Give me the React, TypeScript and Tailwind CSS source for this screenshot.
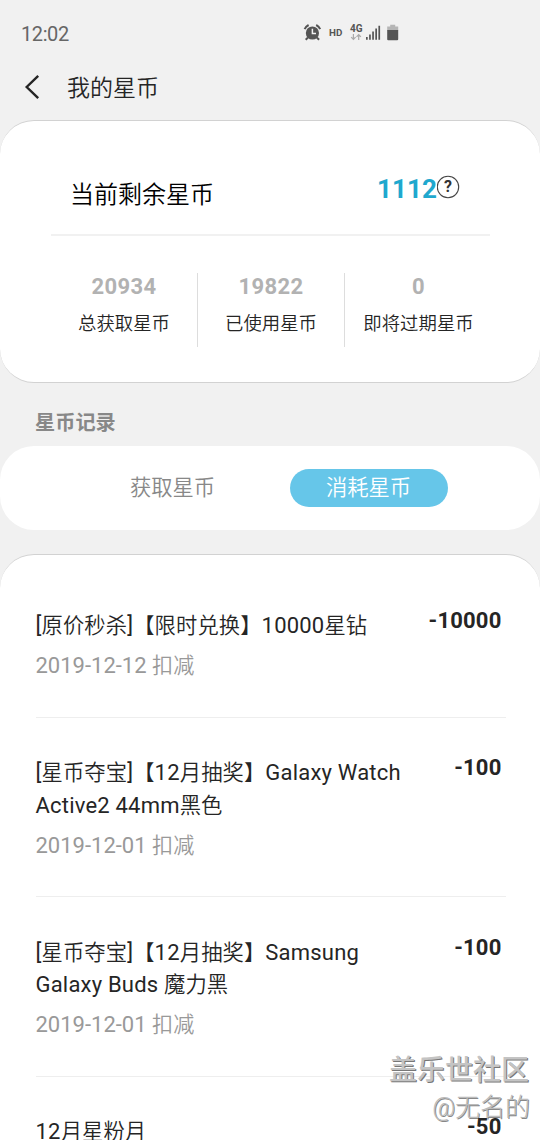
import React from "react";

type Item = { lines: string[]; date?: string; amount: string };

const records: Item[] = [
  { lines: ["[原价秒杀]【限时兑换】10000星钻"], date: "2019-12-12 扣减", amount: "-10000" },
  { lines: ["[星币夺宝]【12月抽奖】Galaxy Watch", "Active2 44mm黑色"], date: "2019-12-01 扣减", amount: "-100" },
  { lines: ["[星币夺宝]【12月抽奖】Samsung", "Galaxy Buds 魔力黑"], date: "2019-12-01 扣减", amount: "-100" },
  { lines: ["12月星粉月"], amount: "-50" },
];

const stats = [
  { value: "20934", label: "总获取星币" },
  { value: "19822", label: "已使用星币" },
  { value: "0", label: "即将过期星币" },
];

/* Chinese runs are set slightly smaller than the Latin ones. */
function Mixed({ text, cjk }: { text: string; cjk: string }) {
  const parts = text.split(/([\u3000-\u9fff]+)/).filter(Boolean);
  return (
    <>
      {parts.map((p, i) =>
        /[\u3000-\u9fff]/.test(p) ? <span key={i} className={cjk}>{p}</span> : <React.Fragment key={i}>{p}</React.Fragment>
      )}
    </>
  );
}

function StatusBar() {
  return (
    <div className="flex h-[60px] shrink-0 items-start pl-[21px] pt-[21px] text-[#666]">
      <span className="w-[282px] pt-px text-[20px] leading-[24px] tracking-[-0.4px]">12:02</span>
      <svg className="mt-[2px]" width="100" height="20" viewBox="303 23 100 20" fill="#555">
        <circle cx="312.4" cy="33" r="6.6" />
        <path d="M304.6 29.2a9 9 0 0 1 4-4.2M320.2 29.2a9 9 0 0 0-4-4.2M308 37.5l-2.3 2.3M316.8 37.5l2.3 2.3" stroke="#555" strokeWidth="2" fill="none" />
        <path d="M312.4 28.8v4.6h3.6" stroke="#f1f1f1" strokeWidth="1.5" fill="none" />
        <text x="329" y="35.6" fontSize="9.8" fontWeight="700" fontFamily="Roboto">HD</text>
        <text x="350" y="31.6" fontSize="10" fontWeight="700" fontFamily="Roboto">4G</text>
        <path d="M353.4 34v5.5M351.2 37.2l2.2 2.3 2.2-2.3M358.7 40v-5.5M356.5 36.8l2.2-2.3 2.2 2.3" stroke="#aaa" strokeWidth="1.2" fill="none" />
        <path d="M366 37h1.7v2.7h-1.7zM369.1 34.5h1.7v5.2h-1.7zM372.2 31.5h1.7v8.2h-1.7zM375.3 28.5h1.7v11.2h-1.7zM378.4 25.8h1.7v13.9h-1.7z" />
        <path d="M390.2 24.8h5v1.7h3v4h-11v-4h3z" fill="#b5b5b5" />
        <path d="M387.2 30h11v9.2a1 1 0 0 1-1 1h-9a1 1 0 0 1-1-1z" />
      </svg>
    </div>
  );
}

export default function App() {
  return (
    <div className="relative flex h-[1140px] w-[540px] flex-col overflow-hidden bg-[#f1f1f1] font-['Roboto','Noto_Sans_CJK_SC',sans-serif] text-[#252525]">
      <StatusBar />
      <header className="flex h-[60px] shrink-0 items-start pl-[23px] pt-[11px]">
        <svg className="mt-[2.5px]" width="18" height="26" viewBox="0 0 18 26" fill="none" stroke="#252525" strokeWidth="2.4">
          <path d="M15.2 1.8 3.7 13l11.5 11.2" />
        </svg>
        <h1 className="ml-[26px] pt-px text-[23px] font-[350] leading-[34px]">我的星币</h1>
      </header>

      <section className="h-[263px] shrink-0 rounded-[34px] border-y border-[#d2d2d2] bg-white pl-[51px] pr-[50px]">
        <div className="flex h-[115px] justify-between border-b-2 border-[#f1f1f1] pl-[19px] pr-[30px]">
          <h2 className="mt-[57px] text-[24px] font-[350] leading-[34px] text-black">当前剩余星币</h2>
          <div className="mt-[52px] flex items-start">
            <b className="text-[26px] leading-[32px] tracking-[0.1px] text-[#1fa8ce]">1112</b>
            <svg className="mt-[2px]" width="23" height="24" viewBox="0 0 23 24">
              <circle cx="11" cy="12" r="10.7" fill="none" stroke="#444" strokeWidth="1.1" />
              <text x="11.1" y="17.3" textAnchor="middle" fontSize="16" fontWeight="700" fontFamily="Roboto" fill="#333">?</text>
            </svg>
          </div>
        </div>
        <div className="mt-[37px] flex h-[74px] divide-x divide-[#ddd]">
          {stats.map((s) => (
            <div key={s.label} className="flex w-[147px] shrink-0 flex-col items-center">
              <b className="text-[22px] leading-[28px] tracking-[0.4px] text-[#b2b2b2]">{s.value}</b>
              <span className="mt-[9px] whitespace-nowrap text-[18.4px] font-[350] leading-[28px]">{s.label}</span>
            </div>
          ))}
        </div>
      </section>

      <h3 className="flex h-[63px] shrink-0 items-center pl-[35px] pt-[18px] text-[20.2px] font-bold text-[#888]">星币记录</h3>

      <nav className="flex h-[84px] shrink-0 items-center justify-center rounded-[34px] bg-white text-[21.3px] font-[350]">
        <button className="ml-px mr-[38px] h-[38px] w-[158px] pb-[1px] text-[#888]">获取星币</button>
        <button className="h-[38px] w-[158px] rounded-full bg-[#66c6e9] pb-[1px] text-white">消耗星币</button>
      </nav>

      <main className="mt-[24px] h-[640px] shrink-0 rounded-t-[34px] border-t border-[#d2d2d2] bg-white pl-[35.5px] pr-[34.5px] pt-[15.5px]">
        {records.map((r, i) => (
          <article key={i} className="border-b border-[#eee] pb-[34px] pt-[39.5px]">
            <div className="flex items-start justify-between pr-[4px]">
              <div className="whitespace-nowrap text-[22px] font-normal leading-[32.5px] tracking-[0.2px]">
                {r.lines.map((l) => (
                  <p key={l} className="h-[32.5px]"><Mixed text={l} cjk="font-[350] text-[21.3px] tracking-[0.1px]" /></p>
                ))}
              </div>
              <b className="relative z-10 text-[22px] leading-[22px] tracking-[0.2px]">{r.amount}</b>
            </div>
            {r.date && (
              <p className="mt-[6.5px] h-[33.5px] text-[22px] leading-[33px] text-[#999]">
                <Mixed text={r.date} cjk="font-[350] text-[21.1px]" />
              </p>
            )}
          </article>
        ))}
      </main>

      <div className="absolute bottom-[14px] right-[10px] flex flex-col items-end">
        <span className="mr-px text-[28px] font-medium leading-[38px] text-[#c4c4c4] [text-shadow:1px_1px_0_#777]">盖乐世社区</span>
        <span className="text-[25px] font-light leading-[36px] text-[#bbb] [text-shadow:1px_1px_0_#888]">@无名的</span>
      </div>
    </div>
  );
}
